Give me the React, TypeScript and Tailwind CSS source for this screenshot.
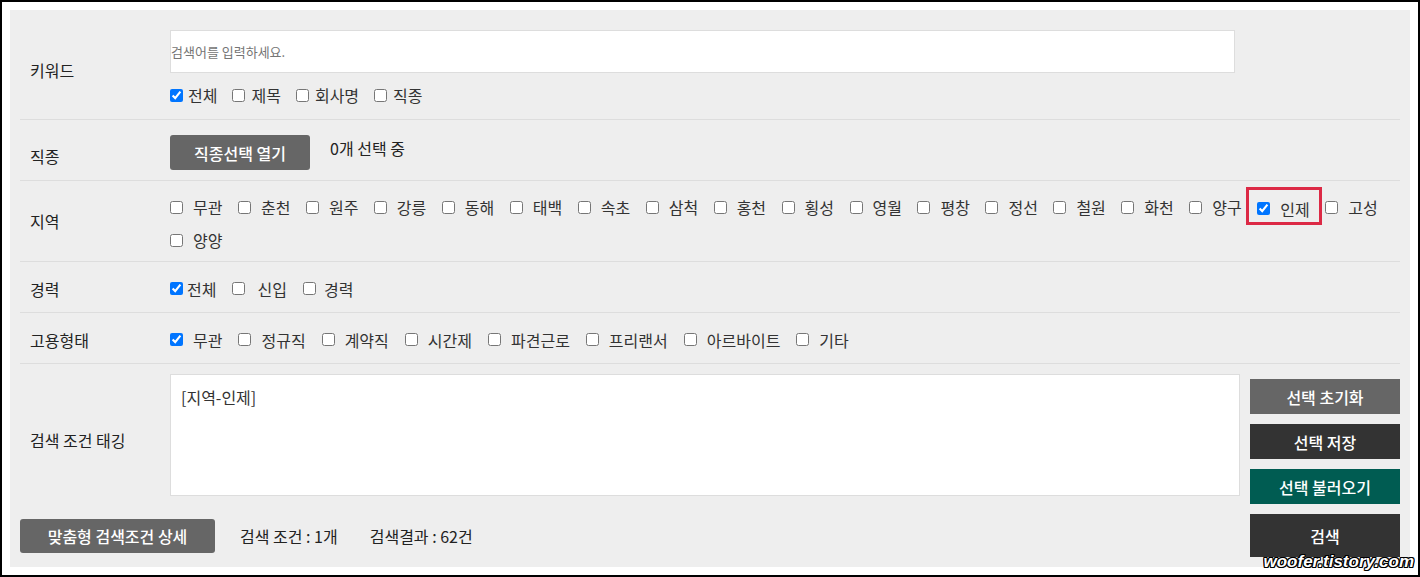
import React from "react";

const font = "font-['Noto_Sans_CJK_KR','Noto_Sans',sans-serif]";

const regions = [
  "무관", "춘천", "원주", "강릉", "동해", "태백", "속초", "삼척", "홍천", "횡성",
  "영월", "평창", "정선", "철원", "화천", "양구", "인제", "고성", "양양",
];

const jobTypes = ["무관", "정규직", "계약직", "시간제", "파견근로", "프리랜서", "아르바이트", "기타"];

function Check({
  label,
  checked,
  gap = "ml-[10px]",
}: {
  label: string;
  checked?: boolean;
  gap?: string;
}) {
  return (
    <label className="inline-flex h-[22px] items-center text-[16px] leading-[22px] text-[#333]">
      <input type="checkbox" defaultChecked={checked} className="m-0 h-[13px] w-[13px] shrink-0" />
      <span className={gap}>{label}</span>
    </label>
  );
}

export default function App() {
  return (
    <div className={`relative h-[577px] w-[1420px] border-2 border-black bg-white pl-2 pt-2 ${font}`}>
      <div className="h-[557px] w-[1400px] bg-[#eeeeee]">
        {/* 키워드 */}
        <div className="mx-[10px] flex h-[110px] border-b border-[#dddddd]">
          <div className="w-[150px] shrink-0 pl-[10px] pt-[49px] text-[16px] leading-[22px] text-[#222]">키워드</div>
          <div className="pt-[20px]">
            <input
              placeholder="검색어를 입력하세요."
              className="block h-[43px] w-[1065px] border border-[#dddddd] bg-white px-0 text-[13px] placeholder:text-[#757575] outline-none"
            />
            <div className="mt-[11px] flex gap-x-[15px]">
              <Check label="전체" checked gap="ml-[5px]" />
              <Check label="제목" gap="ml-[6px]" />
              <Check label="회사명" gap="ml-[6px]" />
              <Check label="직종" gap="ml-[6px]" />
            </div>
          </div>
        </div>

        {/* 직종 */}
        <div className="mx-[10px] flex h-[61px] border-b border-[#dddddd]">
          <div className="w-[150px] shrink-0 pl-[10px] pt-[25px] text-[16px] leading-[22px] text-[#222]">직종</div>
          <div className="flex items-start pt-[15px]">
            <button className="h-[35px] w-[140px] rounded-[3px] bg-[#666666] text-[16px] font-medium text-white">
              직종선택 열기
            </button>
            <span className="ml-[20px] mt-[2px] text-[16px] leading-[22px] text-[#222]">0개 선택 중</span>
          </div>
        </div>

        {/* 지역 */}
        <div className="mx-[10px] flex h-[81px] items-center border-b border-[#dddddd]">
          <div className="w-[150px] shrink-0 pl-[10px] text-[16px] leading-[22px] text-[#222]">지역</div>
          <div className="flex flex-1 flex-wrap gap-x-[15.5px] gap-y-[9px] pt-[5px]">
            {regions.map((r) =>
              r === "인제" ? (
                <div key={r} className="relative">
                  <Check label={r} checked />
                  <div className="pointer-events-none absolute -bottom-[5px] -left-[11px] -right-[12px] -top-[9px] border-[3px] border-[#dc2945]" />
                </div>
              ) : (
                <Check key={r} label={r} />
              )
            )}
          </div>
        </div>

        {/* 경력 */}
        <div className="mx-[10px] flex h-[51px] items-center border-b border-[#dddddd] pt-[3px]">
          <div className="w-[150px] shrink-0 pl-[10px] text-[16px] leading-[22px] text-[#222]">경력</div>
          <div className="flex gap-x-[16px]">
            <Check label="전체" checked gap="ml-[4px]" />
            <Check label="신입" gap="ml-[12px]" />
            <Check label="경력" gap="ml-[8px]" />
          </div>
        </div>

        {/* 고용형태 */}
        <div className="mx-[10px] flex h-[51px] items-center border-b border-[#dddddd] pt-[3px]">
          <div className="w-[150px] shrink-0 pl-[10px] text-[16px] leading-[22px] text-[#222]">고용형태</div>
          <div className="flex gap-x-[16px]">
            {jobTypes.map((j, i) => (
              <Check key={j} label={j} checked={i === 0} />
            ))}
          </div>
        </div>

        {/* 검색 조건 태깅 */}
        <div className="mx-[10px] flex">
          <div className="flex-1">
            <div className="flex items-center pt-[10px]">
              <div className="w-[150px] shrink-0 pl-[10px] pt-[10px] text-[16px] leading-[22px] text-[#222]">
                검색 조건 태깅
              </div>
              <textarea
                readOnly
                defaultValue="[지역-인제]"
                className="block h-[122px] flex-1 resize-none border border-[#dddddd] bg-white px-[10px] py-[11px] text-[16px] leading-[22px] text-[#333] outline-none"
              />
            </div>
            <div className="mt-[23px] flex items-center">
              <button className="h-[34px] w-[195px] rounded-[3px] bg-[#666666] text-[16px] font-medium text-white">
                맞춤형 검색조건 상세
              </button>
              <span className="ml-[25px] text-[16px] leading-[22px] text-[#222]">검색 조건 : 1개</span>
              <span className="ml-[32px] text-[16px] leading-[22px] text-[#222]">검색결과 : 62건</span>
            </div>
          </div>
          <div className="ml-[10px] flex w-[150px] flex-col gap-[10px] pt-[15px]">
            <button className="h-[35px] bg-[#666666] text-[16px] font-medium text-white">선택 초기화</button>
            <button className="h-[35px] bg-[#333333] text-[16px] font-medium text-white">선택 저장</button>
            <button className="h-[35px] bg-[#005c52] text-[16px] font-medium text-white">선택 불러오기</button>
            <button className="h-[43px] bg-[#333333] text-[16px] font-medium text-white">검색</button>
          </div>
        </div>
      </div>

      <span className="pointer-events-none absolute bottom-[5px] right-[4px] font-['Liberation_Sans',sans-serif] text-[17px] font-bold italic leading-none text-white [text-shadow:1px_1px_0_#000,-1px_-1px_0_#000,1px_-1px_0_#000,-1px_1px_0_#000,0_1px_0_#000,1px_0_0_#000,0_-1px_0_#000,-1px_0_0_#000]">
        woofer.tistory.com
      </span>
    </div>
  );
}
